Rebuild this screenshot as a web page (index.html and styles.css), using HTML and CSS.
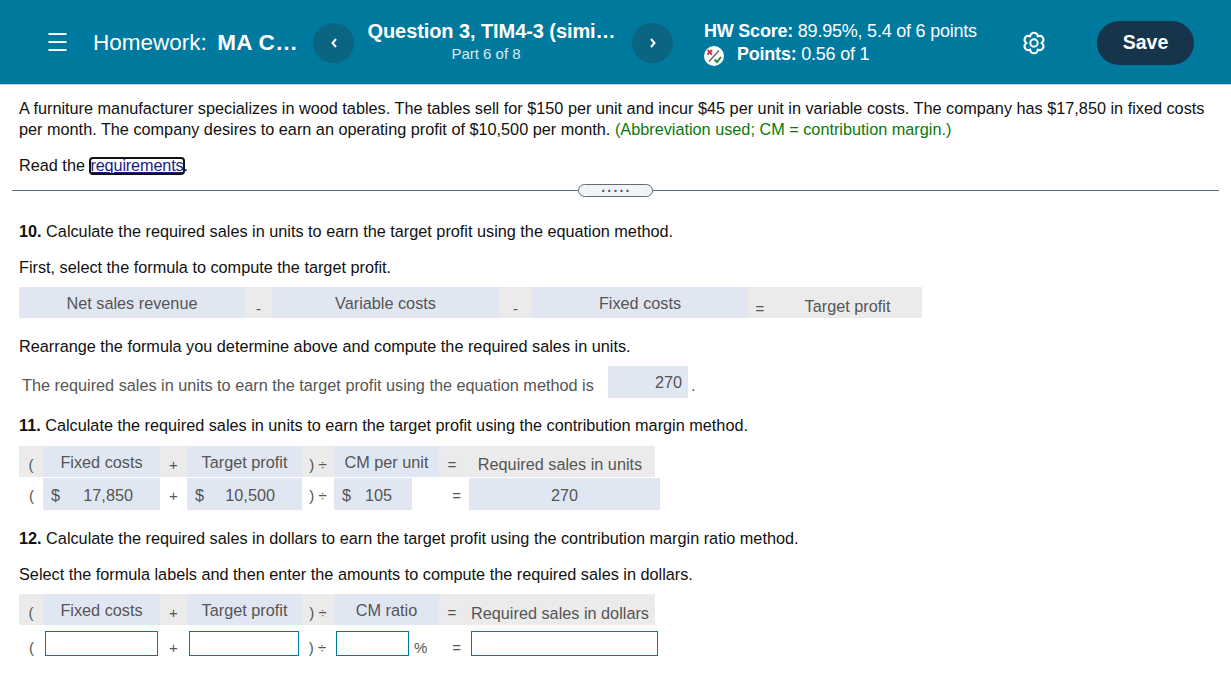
FILE: index.html
```html
<!DOCTYPE html>
<html lang="en">
<head>
  <meta charset="UTF-8">
  <meta name="viewport" content="width=device-width, initial-scale=1.0">
  <title>Homework: MA C...</title>
  <link rel="stylesheet" href="styles.css">
</head>
<body>
  <header class="topbar">
    <svg class="menu-icon" width="20" height="18" viewBox="0 0 20 18"><path d="M0.500 1h18M0.500 9h18M0.500 17h18" stroke="#fff" stroke-width="1.800" fill="none"/></svg>
    <div class="hw-title">Homework: &nbsp;<b>MA C…</b></div>
    <button class="nav-btn"><svg width="8" height="12" viewBox="0 0 8 12"><path d="M6 2L2.500 6L6 10" stroke="#fff" stroke-width="2" fill="none"/></svg></button>
    <div class="q-title">
      <div class="q-name">Question 3, TIM4-3 (simi…</div>
      <div class="q-part">Part 6 of 8</div>
    </div>
    <button class="nav-btn"><svg width="8" height="12" viewBox="0 0 8 12"><path d="M2 2L5.500 6L2 10" stroke="#fff" stroke-width="2" fill="none"/></svg></button>
    <div class="score">
      <div><b>HW Score:</b> 89.95%, 5.4 of 6 points</div>
      <div class="score-points">
        <svg class="points-icon" width="20" height="20" viewBox="0 0 20 20">
          <circle cx="10" cy="10" r="10" fill="#fff"/>
          <path d="M3.500 4l4.500 4.500M8 4L3.500 8.500" stroke="#c8303a" stroke-width="1.800" fill="none"/>
          <path d="M5 15.500L15 4.500" stroke="#666" stroke-width="1.400" fill="none"/>
          <path d="M10.500 13.500l2.500 2.500 4-5" stroke="#178a3c" stroke-width="1.900" fill="none"/>
        </svg>
        <span><b>Points:</b> 0.56 of 1</span>
      </div>
    </div>
    <svg class="gear-icon" width="24" height="24" viewBox="-1 -1 26 26" fill="none" stroke="#fff" stroke-width="2.200">
      <circle cx="12" cy="12" r="4"/>
      <path d="M7.850 4.810C8.640 -.56 15.360 -.56 16.150 4.810C21.190 2.810 24.560 8.640 20.300 12C24.560 15.360 21.190 21.190 16.150 19.190C15.360 24.560 8.640 24.560 7.850 19.190C2.810 21.190 -.56 15.360 3.700 12C-.56 8.640 2.810 2.810 7.850 4.810Z"/>
    </svg>
    <button class="save-btn">Save</button>
  </header>

  <main class="content">
    <p class="intro">A furniture manufacturer specializes in wood tables. The tables sell for $150 per unit and incur $45 per unit in variable costs. The company has $17,850 in fixed costs per month. The company desires to earn an operating profit of $10,500 per month. <span class="hint">(Abbreviation used; CM = contribution margin.)</span></p>
    <p class="read-line">Read the <a class="req-link" href="#">requirements</a>.</p>

    <div class="divider"><span class="handle">.....</span></div>

    <p class="q10"><b>10.</b> Calculate the required sales in units to earn the target profit using the equation method.</p>
    <p class="first-line">First, select the formula to compute the target profit.</p>
    <div class="formula-wide">
      <span class="cell pick">Net sales revenue</span>
      <span class="cell op">-</span>
      <span class="cell pick">Variable costs</span>
      <span class="cell op">-</span>
      <span class="cell pick">Fixed costs</span>
      <span class="cell op op-eq">=</span>
      <span class="cell plain low">Target profit</span>
    </div>
    <p class="rearrange">Rearrange the formula you determine above and compute the required sales in units.</p>
    <div class="answer-line">
      <span class="answer-label">The required sales in units to earn the target profit using the equation method is</span>
      <span class="answer-box">270</span>
      <span class="answer-dot">.</span>
    </div>

    <p class="q11"><b>11.</b> Calculate the required sales in units to earn the target profit using the contribution margin method.</p>
    <div class="formula">
      <div class="f-row head">
        <span class="cell op">(</span>
        <span class="cell pick">Fixed costs</span>
        <span class="cell op">+</span>
        <span class="cell pick">Target profit</span>
        <span class="cell op">) ÷</span>
        <span class="cell pick">CM per unit</span>
        <span class="cell op eq">=</span>
        <span class="cell plain low result">Required sales in units</span>
      </div>
      <div class="f-row values">
        <span class="cell blank">(</span>
        <span class="cell pick money"><i>$</i>17,850</span>
        <span class="cell blank">+</span>
        <span class="cell pick money"><i>$</i>10,500</span>
        <span class="cell blank">) ÷</span>
        <span class="cell pick money short"><i>$</i>105</span>
        <span class="cell blank eq">=</span>
        <span class="cell pick result-val">270</span>
      </div>
    </div>

    <p class="q12"><b>12.</b> Calculate the required sales in dollars to earn the target profit using the contribution margin ratio method.</p>
    <p class="first-line">Select the formula labels and then enter the amounts to compute the required sales in dollars.</p>
    <div class="formula ratio">
      <div class="f-row head">
        <span class="cell op">(</span>
        <span class="cell pick">Fixed costs</span>
        <span class="cell op">+</span>
        <span class="cell pick">Target profit</span>
        <span class="cell op">) ÷</span>
        <span class="cell pick">CM ratio</span>
        <span class="cell op eq">=</span>
        <span class="cell plain low result">Required sales in dollars</span>
      </div>
      <div class="f-row inputs">
        <span class="cell blank">(</span>
        <input class="num-input" type="text">
        <span class="cell blank">+</span>
        <input class="num-input" type="text">
        <span class="cell blank">) ÷</span>
        <span class="pct"><input class="num-input" type="text"><span>%</span></span>
        <span class="cell blank eq">=</span>
        <input class="num-input" type="text">
      </div>
    </div>
  </main>
</body>
</html>
```

FILE: styles.css
```css
html, body {
  height: 100%;
  overflow: hidden;
}
body {
  margin: 0;
  font-family: "Liberation Sans", Arial, sans-serif;
  font-size: 16.25px;
  line-height: 21px;
  color: #111;
  background: #fff;
}
p {
  margin: 0;
}

/* top bar */
.topbar {
  display: flex;
  align-items: center;
  height: 85px;
  padding-left: 48px;
  box-sizing: border-box;
  background: #00799e;
  border-bottom: 1px solid #c9d2e2;
  color: #fff;
}
.menu-icon {
  flex: none;
  margin-right: 25px;
}
.hw-title {
  width: 220px;
  flex: none;
  font-size: 22.500px;
  white-space: nowrap;
}
.hw-title b {
  margin-left: -2px;
  letter-spacing: 0.3px;
}
.nav-btn {
  flex: none;
  display: flex;
  align-items: center;
  justify-content: center;
  width: 41px;
  height: 40px;
  margin-top: 2px;
  padding: 0;
  border: 0;
  border-radius: 50%;
  background: #0b6482;
}
.q-title {
  width: 278px;
  flex: none;
  box-sizing: border-box;
  padding-right: 3px;
  text-align: center;
  margin-top: -2px;
}
.q-name {
  font-size: 20px;
  font-weight: bold;
  line-height: 24px;
  letter-spacing: -0.08px;
  white-space: nowrap;
}
.q-part {
  font-size: 15px;
  line-height: 21px;
  padding-right: 11px;
  color: #dcebf2;
}
.score {
  width: 318px;
  flex: none;
  margin-left: 31px;
  font-size: 18px;
  line-height: 22px;
  letter-spacing: -0.22px;
  margin-top: 1px;
}
.score-points {
  display: flex;
  align-items: center;
  gap: 13px;
  margin-top: 1px;
}
.points-icon {
  flex: none;
  margin-top: 3px;
}
.gear-icon {
  flex: none;
  margin-top: 2px;
}
.save-btn {
  flex: none;
  width: 97px;
  height: 44px;
  margin: 2px 0 0 51px;
  padding: 0 0 2px;
  border: 0;
  border-radius: 22px;
  background: #17354a;
  color: #fff;
  font: bold 19.500px "Liberation Sans", Arial, sans-serif;
}

/* question area */
.content {
  padding: 13px 19px 0;
}
.read-line {
  margin-top: 15px;
}
.req-link {
  display: inline-block;
  height: 16px;
  line-height: 15px;
  margin-left: 1px;
  color: #1a1a8c;
  letter-spacing: -0.15px;
  outline: 2px solid #111;
  border-radius: 3px;
  outline-offset: -1px;
}
.hint {
  color: #0a7a0a;
}
.divider {
  position: relative;
  display: flex;
  justify-content: center;
  align-items: center;
  height: 13px;
  margin: 8px -7px 0 -7px;
}
.divider::before {
  content: "";
  position: absolute;
  left: 0;
  right: 0;
  top: 6px;
  height: 1px;
  background: #5f6f7c;
}
.handle {
  position: relative;
  box-sizing: border-box;
  width: 75px;
  height: 13px;
  padding-left: 2px;
  border: 1px solid #5f6f7c;
  border-radius: 7px;
  background: #f1f3f6;
  color: #4a5a68;
  font-size: 14px;
  font-weight: bold;
  line-height: 5px;
  text-align: center;
  letter-spacing: 2.200px;
}
.q10 {
  margin-top: 24px;
}
.first-line {
  margin-top: 15px;
}
.rearrange {
  margin-top: 18px;
}
.q11 {
  margin-top: 17px;
}
.q12 {
  margin-top: 18px;
}

/* formula rows */
.cell {
  display: flex;
  align-items: center;
  justify-content: center;
  box-sizing: border-box;
  color: #555;
  white-space: nowrap;
}
.pick {
  padding-top: 2px;
  background: #e1e7f2;
}
.op, .plain {
  background: #ebebeb;
}
.op {
  padding-top: 7px;
  font-size: 15px;
  line-height: 16px;
}
.low {
  padding-top: 7px;
  padding-right: 3px;
}
.result {
  padding-top: 5px;
  padding-right: 4px;
}
.ratio .result {
  padding-top: 7px;
}
.formula-wide {
  display: grid;
  grid-template-columns: 226px 27px 227px 33px 216px 28px 146px;
  grid-template-rows: 31px;
  width: 903px;
  height: 31px;
  margin-top: 9px;
}
.formula-wide .op {
  padding-top: 13px;
}
.formula-wide .op-eq {
  padding-right: 4px;
}
.answer-line {
  display: flex;
  align-items: flex-start;
  height: 32px;
  margin-top: 9px;
  color: #555;
}
.answer-label {
  width: 586px;
  padding: 9px 0 0 3px;
}
.answer-box {
  box-sizing: border-box;
  width: 80px;
  height: 32px;
  padding: 6px 6px 0 0;
  background: #e1e7f2;
  text-align: right;
}
.answer-dot {
  margin: 9px 0 0 3px;
}

.formula {
  margin-top: 10px;
}
.formula.ratio {
  margin-top: 9px;
}
.f-row {
  display: grid;
  grid-template-columns: 24px 117px 27px 115px 32px 105px 30px 186px;
}
.head {
  width: 636px;
  height: 31px;
}
.head .eq {
  padding-right: 4px;
}
.values {
  grid-template-columns: 24px 117px 27px 115px 32px 78px 57px 191px;
  height: 32px;
  margin-top: 1px;
}
.money {
  justify-content: space-between;
  padding-left: 8px;
  padding-right: 27px;
}
.money i {
  font-style: normal;
}
.short {
  justify-content: flex-start;
  padding-right: 0;
  gap: 14px;
}
.blank {
  padding-top: 2px;
  font-size: 15px;
}
.values .blank:first-child, .inputs .blank:first-child {
  justify-content: flex-start;
  padding-left: 10px;
}
.inputs {
  grid-template-columns: 26px 113px 31px 110px 37px 73px 62px 187px;
  height: 25px;
  margin-top: 6px;
}
.inputs .blank {
  padding-top: 6px;
}
.num-input {
  box-sizing: border-box;
  width: 100%;
  height: 25px;
  margin: 0;
  padding: 0;
  border: 1px solid #00799e;
  border-radius: 0;
  background: #fff;
}
.pct {
  position: relative;
  display: block;
}
.pct span {
  position: absolute;
  left: 78px;
  top: 6px;
  color: #555;
  font-size: 15px;
}
.inputs .eq {
  justify-content: flex-end;
  padding-right: 10px;
}
.values .eq {
  justify-content: flex-end;
  padding-right: 8px;
}
```
